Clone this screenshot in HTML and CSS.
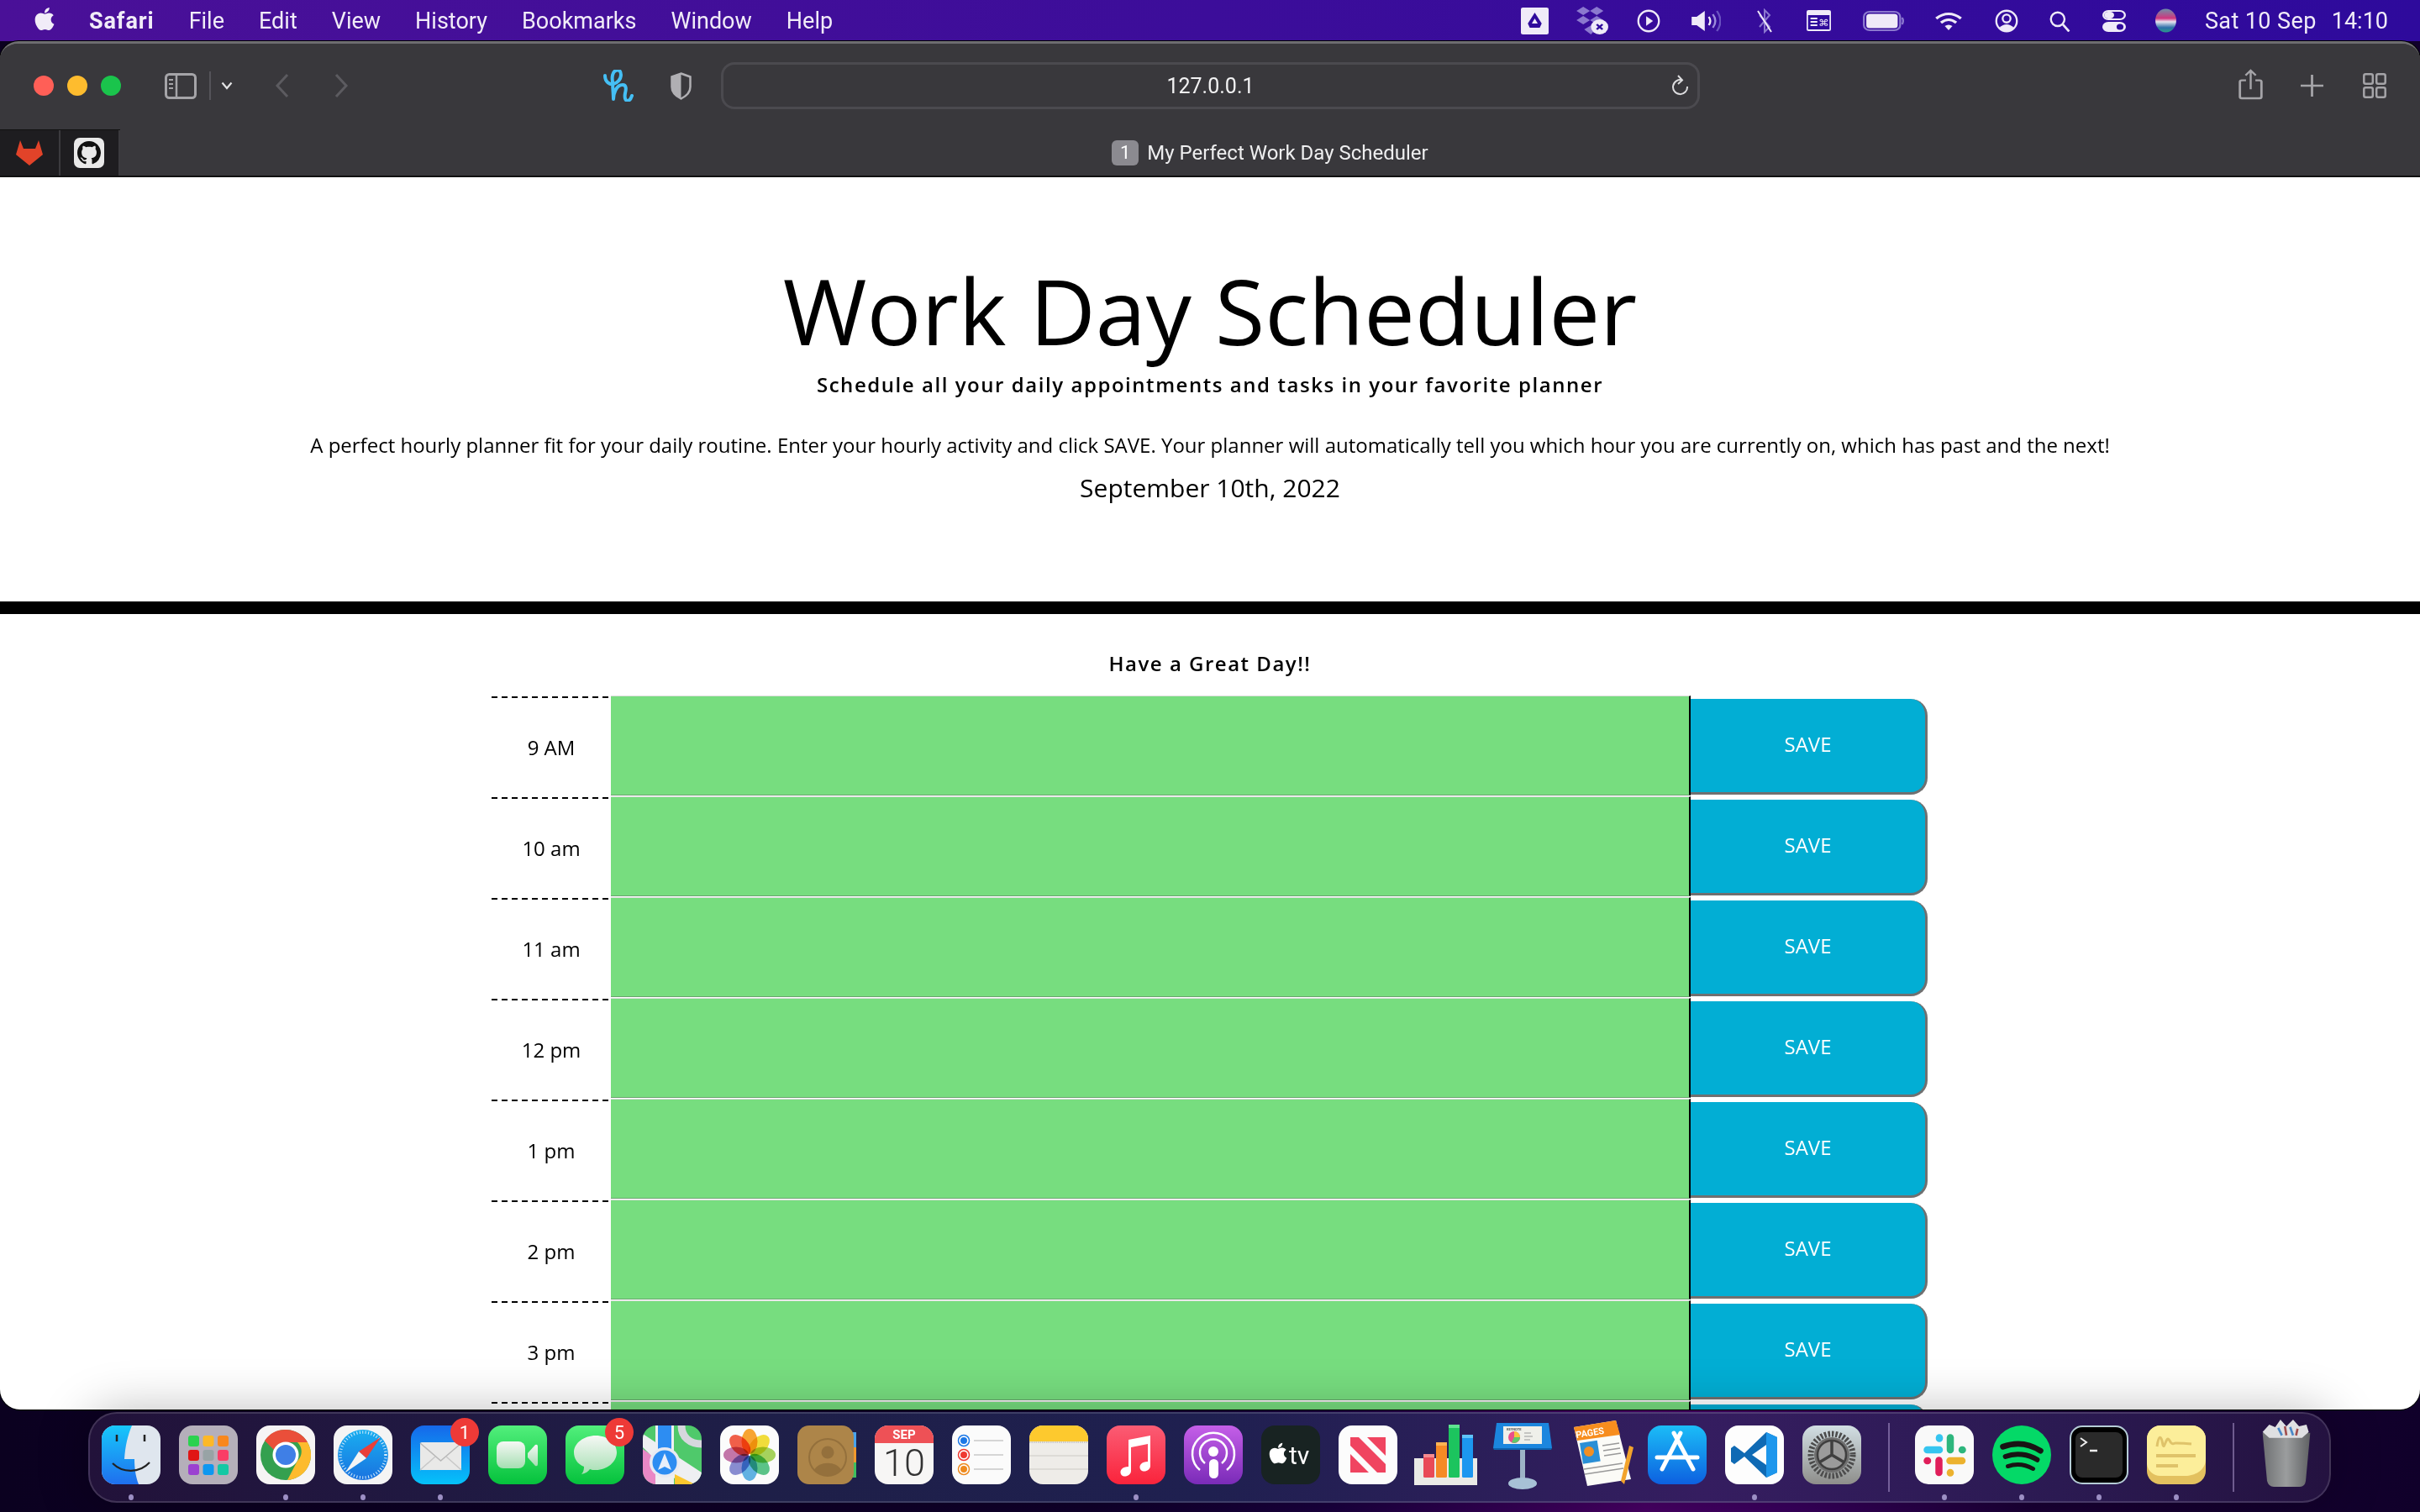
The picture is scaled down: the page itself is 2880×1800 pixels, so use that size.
FILE: index.html
```html
<!DOCTYPE html>
<html lang="en">
<head>
<meta charset="utf-8">
<title>My Perfect Work Day Scheduler</title>
<link rel="stylesheet" href="styles.css">
</head>
<body>
<div class="menubar">
  <svg class="apple" viewBox="0 0 384 512"><path fill="#f1ecf8" d="M318.7 268.7c-.2-36.7 16.4-64.4 50-84.8-18.8-26.9-47.2-41.7-84.7-44.6-35.5-2.8-74.3 20.7-88.5 20.7-15 0-49.4-19.7-76.4-19.7C63.3 141.2 4 184.8 4 273.5q0 39.3 14.4 81.2c12.8 36.7 59 126.7 107.2 125.2 25.2-.6 43-17.9 75.8-17.9 31.8 0 48.3 17.9 76.4 17.9 48.6-.7 90.4-82.5 102.6-119.3-65.2-30.7-61.7-90-61.7-91.9zm-56.6-164.2c27.3-32.4 24.8-61.9 24-72.5-24.1 1.4-52 16.4-67.9 34.9-17.5 19.8-27.8 44.3-25.6 71.9 26.1 2 49.9-11.4 69.5-34.3z"/></svg>
  <nav class="menus">
    <span class="menu-app">Safari</span><span>File</span><span>Edit</span><span>View</span><span>History</span><span>Bookmarks</span><span>Window</span><span>Help</span>
  </nav>
  <div class="status">
    <svg class="st-drive" viewBox="0 0 28 32" preserveAspectRatio="none"><rect width="28" height="32" rx="2" fill="#efeaf8"/><path d="M14 6l7 13-2 5H9l-2-5z" fill="#2f0a9c"/><path d="M14 13l3 6h-6z" fill="#efeaf8"/></svg>
    <svg class="st-dropbox" viewBox="0 0 34 33" preserveAspectRatio="none"><g fill="#8b78cf"><path d="M8 0l7 5-7 5-7-5z"/><path d="M22 0l7 5-7 5-7-5z"/><path d="M8 11l7 5-7 5-7-5z"/><path d="M22 11l7 5-7 5-7-5z"/><path d="M15 23l7-5 3 3-9 12-7-6z"/></g><circle cx="25" cy="24" r="9" fill="#efeaf8"/><path d="M22 21l6 6m0-6l-6 6" stroke="#2f0a9c" stroke-width="2.2"/></svg>
    <svg class="st-play" viewBox="0 0 24 24"><circle cx="12" cy="12" r="10.5" fill="none" stroke="#efeaf8" stroke-width="2"/><path d="M9.5 7l7 5-7 5z" fill="#efeaf8"/></svg>
    <svg class="st-vol" viewBox="0 0 30 26" preserveAspectRatio="none"><path d="M1 8h5l8-7v24l-8-7H1z" fill="#efeaf8"/><path d="M18 8q3 5 0 10" fill="none" stroke="#efeaf8" stroke-width="2"/><path d="M22 5q5 8 0 16" fill="none" stroke="#9c8cdb" stroke-width="2"/><path d="M26 1q7 12 0 24" fill="none" stroke="#6a52c0" stroke-width="2"/></svg>
    <svg class="st-bt" viewBox="0 0 22 30"><path d="M5 8l12 14-6 6V2l6 6L5 22" fill="none" stroke="#8b78cf" stroke-width="2"/><path d="M3 3l16 25" stroke="#efeaf8" stroke-width="2"/></svg>
    <svg class="st-cmd" viewBox="0 0 25 25" preserveAspectRatio="none"><rect width="25" height="25" rx="2" fill="#efeaf8"/><rect x="1.5" y="6" width="22" height="17" fill="#2f0a9c"/><path d="M4 10h7M4 14h7M4 18h7" stroke="#efeaf8" stroke-width="2"/><text class="st-cmd-key" x="12" y="19">⌘</text></svg>
    <svg class="st-batt" viewBox="0 0 42 24" preserveAspectRatio="none"><rect x="1" y="1" width="37" height="22" rx="6" fill="none" stroke="#8b78cf" stroke-width="2"/><rect x="3.5" y="3.500" width="32" height="17" rx="3.500" fill="#efeaf8"/><path d="M40 8q2 4 0 8" fill="none" stroke="#8b78cf" stroke-width="2"/></svg>
    <svg class="st-wifi" viewBox="0 0 30 24" preserveAspectRatio="none"><path d="M2 9q13-11 26 0M7 14q8-7 16 0" fill="none" stroke="#efeaf8" stroke-width="3"/><path d="M11 18q4-3 8 0l-4 5z" fill="#efeaf8"/></svg>
    <svg class="st-user" viewBox="0 0 24 24"><circle cx="12" cy="12" r="10.500" fill="none" stroke="#efeaf8" stroke-width="2"/><circle cx="12" cy="9.500" r="4" fill="none" stroke="#efeaf8" stroke-width="2"/><path d="M4.500 19q7.500-7 15 0-7.500 7-15 0z" fill="#efeaf8"/></svg>
    <svg class="st-search" viewBox="0 0 24 24"><circle cx="10" cy="10" r="7.500" fill="none" stroke="#efeaf8" stroke-width="2.200"/><path d="M15.500 15.500l7 8" stroke="#efeaf8" stroke-width="2.500"/></svg>
    <svg class="st-cc" viewBox="0 0 24 26" preserveAspectRatio="none"><rect x="1" y="1" width="22" height="10" rx="5" fill="none" stroke="#efeaf8" stroke-width="2"/><rect x="2" y="2" width="10" height="8" rx="4" fill="#efeaf8"/><rect y="14" width="24" height="12" rx="6" fill="#efeaf8"/><circle cx="18" cy="20" r="3.500" fill="#2f0a9c"/></svg>
    <svg class="st-siri" viewBox="0 0 28 28"><defs><linearGradient id="siri" x1="0" y1="0" x2="0" y2="1"><stop offset="0" stop-color="#6e8fa8"/><stop offset=".4" stop-color="#d0367e"/><stop offset=".55" stop-color="#e8e4f0"/><stop offset=".8" stop-color="#2c6ea8"/><stop offset="1" stop-color="#2c9a8a"/></linearGradient></defs><ellipse cx="14" cy="14" rx="12" ry="13.500" fill="url(#siri)"/></svg>
    <span class="clock-date">Sat 10 Sep</span><span class="clock-time">14:10</span>
  </div>
</div>

<div class="window">
  <header class="toolbar">
    <div class="lights"><i class="light red"></i><i class="light amber"></i><i class="light green"></i></div>
    <svg class="tb-sidebar" viewBox="0 0 38 31"><rect x="1.500" y="1.500" width="35" height="28" rx="4" fill="none" stroke="#a5a4a8" stroke-width="3"/><path d="M14 2v27" stroke="#a5a4a8" stroke-width="2.500"/><path d="M5 8h5M5 13h5M5 18h5" stroke="#a5a4a8" stroke-width="2"/></svg>
    <i class="tb-divider"></i>
    <svg class="tb-chev" viewBox="0 0 14 10"><path d="M1.500 1.500L7 8l5.500-6.500" fill="none" stroke="#e2e2e4" stroke-width="2.200"/></svg>
    <svg class="tb-back" viewBox="0 0 17 30"><path d="M15 2L3 15l12 13" fill="none" stroke="#5c5b60" stroke-width="3"/></svg>
    <svg class="tb-fwd" viewBox="0 0 17 30"><path d="M2 2l12 13L2 28" fill="none" stroke="#5c5b60" stroke-width="3"/></svg>
    <svg class="tb-h" viewBox="0 0 36 38"><path d="M2 7c0 8 6 11 10 10s9-5 9-11-4-6-6-5c-4 1-5 8-4 13 0 7 1 15 1 21 0-6 3-17 11-17 5 0 4 6 3 10-1 5 0 9 3 9 3 0 4-3 5-6" fill="none" stroke="#45bff5" stroke-width="4" stroke-linecap="round" stroke-linejoin="round"/></svg>
    <svg class="tb-shield" viewBox="0 0 27 33"><path d="M13.500 1.500l11 4v12c0 7-5 11-11 14-6-3-11-7-11-14v-12z" fill="none" stroke="#b0afb3" stroke-width="2.500"/><path d="M13.500 1.500v30c-6-3-11-7-11-14v-12z" fill="#b0afb3"/></svg>
    <div class="urlbar">
      <span class="url">127.0.0.1</span>
      <svg class="tb-reload" viewBox="0 0 20 26"><path d="M12 6.500A8.500 8.500 0 1 0 18 14" fill="none" stroke="#dcdcde" stroke-width="2"/><path d="M7 1l5 5.500L7 11" fill="none" stroke="#dcdcde" stroke-width="2"/></svg>
    </div>
    <svg class="tb-share" viewBox="0 0 26 38" preserveAspectRatio="none"><path d="M8 14H3.500a2 2 0 0 0-2 2v18a2 2 0 0 0 2 2h19a2 2 0 0 0 2-2V16a2 2 0 0 0-2-2H18" fill="none" stroke="#a5a4a8" stroke-width="2.500"/><path d="M13 25V2M7.500 8L13 2l5.500 6" fill="none" stroke="#a5a4a8" stroke-width="2.200"/></svg>
    <svg class="tb-plus" viewBox="0 0 24 26" preserveAspectRatio="none"><path d="M12 0v26M0 13h24" stroke="#a5a4a8" stroke-width="2.500"/></svg>
    <svg class="tb-grid" viewBox="0 0 28 30"><g fill="none" stroke="#a5a4a8" stroke-width="2.500"><rect x="1.300" y="1.300" width="10.500" height="11.500" rx="2"/><rect x="16.200" y="1.300" width="10.500" height="11.500" rx="2"/><rect x="1.300" y="17.200" width="10.500" height="11.500" rx="2"/><rect x="16.200" y="17.200" width="10.500" height="11.500" rx="2"/></g></svg>
  </header>
  <div class="tabbar">
    <div class="pins">
      <div class="pin"><svg class="pin-gitlab" viewBox="0 0 32 30"><path d="M5 0l4 10h14l4-10 5 17-16 13L0 17z" fill="#e24329"/></svg></div>
      <div class="pin"><svg class="pin-github" viewBox="0 0 36 36"><rect width="36" height="36" rx="7" fill="#e9e9e9"/><g transform="translate(4 4) scale(1.750)"><path fill="#111" d="M8 0C3.580 0 0 3.580 0 8c0 3.540 2.290 6.530 5.470 7.590.4.070.55-.17.55-.38 0-.19-.01-.82-.01-1.490-2.010.37-2.530-.49-2.690-.94-.09-.23-.48-.94-.82-1.130-.28-.15-.68-.52-.01-.53.63-.01 1.080.58 1.230.82.72 1.210 1.870.87 2.330.66.07-.52.28-.87.51-1.070-1.780-.2-3.640-.89-3.640-3.950 0-.87.31-1.590.82-2.150-.08-.2-.36-1.020.08-2.120 0 0 .67-.21 2.200.82.64-.18 1.320-.27 2-.27s1.360.09 2 .27c1.530-1.040 2.200-.82 2.200-.82.44 1.100.16 1.920.08 2.120.51.56.82 1.270.82 2.150 0 3.070-1.870 3.750-3.650 3.950.29.25.54.73.54 1.480 0 1.070-.01 1.930-.01 2.200 0 .21.15.46.55.38A8.013 8.013 0 0 0 16 8c0-4.420-3.580-8-8-8z"/></g></svg></div>
    </div>
    <div class="tab-title"><span class="tab-badge">1</span><span>My Perfect Work Day Scheduler</span></div>
  </div>

  <main class="page">
    <section class="intro">
      <h1 class="title">Work Day Scheduler</h1>
      <p class="lead">Schedule all your daily appointments and tasks in your favorite planner</p>
      <p class="blurb">A perfect hourly planner fit for your daily routine. Enter your hourly activity and click SAVE. Your planner will automatically tell you which hour you are currently on, which has past and the next!</p>
      <p class="today">September 10th, 2022</p>
    </section>
    <hr class="rule">
    <p class="greeting">Have a Great Day!!</p>
    <div class="planner">
      <div class="row"><div class="hour">9 AM</div><div class="task"></div><button class="save">SAVE</button></div>
      <div class="row"><div class="hour">10 am</div><div class="task"></div><button class="save">SAVE</button></div>
      <div class="row"><div class="hour">11 am</div><div class="task"></div><button class="save">SAVE</button></div>
      <div class="row"><div class="hour">12 pm</div><div class="task"></div><button class="save">SAVE</button></div>
      <div class="row"><div class="hour">1 pm</div><div class="task"></div><button class="save">SAVE</button></div>
      <div class="row"><div class="hour">2 pm</div><div class="task"></div><button class="save">SAVE</button></div>
      <div class="row"><div class="hour">3 pm</div><div class="task"></div><button class="save">SAVE</button></div>
      <div class="row"><div class="hour"></div><div class="task"></div><button class="save"></button></div>
    </div>
  </main>
</div>

<div class="dock">
  <div class="app"><svg viewBox="0 0 70 70"><defs><linearGradient id="fd" x1="0" y1="0" x2="0" y2="1"><stop offset="0" stop-color="#17c8fb"/><stop offset="1" stop-color="#1f6fee"/></linearGradient></defs><rect width="70" height="70" rx="16" fill="#dfe6ee"/><path d="M16 0h20c-5 12-8 24-9 40h12c0 9 1 20 5 30H16A16 16 0 0 1 0 54V16A16 16 0 0 1 16 0z" fill="url(#fd)"/><path d="M18 11v8M51 11v8" stroke="#222" stroke-width="2.500"/><path d="M13 45c12 12 32 12 44-1" fill="none" stroke="#222" stroke-width="2.200"/></svg><i class="dot"></i></div>
  <div class="app"><svg viewBox="0 0 70 70"><rect width="70" height="70" rx="16" fill="#b5afba"/><rect x="11" y="12" width="13" height="13" rx="3" fill="#2bd24f"/><rect x="28.500" y="12" width="13" height="13" rx="3" fill="#fdb827"/><rect x="46" y="12" width="13" height="13" rx="3" fill="#f8871e"/><rect x="11" y="29" width="13" height="13" rx="3" fill="#e01515"/><rect x="28.500" y="29" width="13" height="13" rx="3" fill="#98a3a5"/><rect x="46" y="29" width="13" height="13" rx="3" fill="#fa3d66"/><rect x="11" y="46" width="13" height="13" rx="3" fill="#9b41d1"/><rect x="28.500" y="46" width="13" height="13" rx="3" fill="#0e97f0"/><rect x="46" y="46" width="13" height="13" rx="3" fill="#14c8a4"/></svg></div>
  <div class="app"><svg viewBox="0 0 70 70"><rect width="70" height="70" rx="16" fill="#f6f4f4"/><circle cx="35" cy="35" r="30" fill="#34a04f"/><path d="M35 5a30 30 0 0 1 26 15H35a15 15 0 0 0-14 9L10 18A30 30 0 0 1 35 5z" fill="#ea4f3a"/><path d="M61 20a30 30 0 0 1-24 45l12-23a15 15 0 0 0 0-22z" fill="#fdbb2d"/><circle cx="35" cy="35" r="15.500" fill="#fff"/><circle cx="35" cy="35" r="12" fill="#3f7fe6"/></svg><i class="dot"></i></div>
  <div class="app"><svg viewBox="0 0 70 70"><defs><linearGradient id="sf" x1="0" y1="0" x2="0" y2="1"><stop offset="0" stop-color="#19aef0"/><stop offset="1" stop-color="#1a73e0"/></linearGradient></defs><rect width="70" height="70" rx="16" fill="#f4f4f4"/><circle cx="35" cy="35" r="30" fill="url(#sf)"/><circle cx="35" cy="35" r="27" fill="none" stroke="#d9eefb" stroke-width="3.500" stroke-dasharray="1 2.500"/><path d="M56 14L30 31l9 8z" fill="#ea3f38"/><path d="M14 56l16-25 9 8z" fill="#f4f4f4"/></svg><i class="dot"></i></div>
  <div class="app"><svg viewBox="0 0 70 70"><defs><linearGradient id="ml" x1="0" y1="0" x2="0" y2="1"><stop offset="0" stop-color="#1668ea"/><stop offset="1" stop-color="#05c2fa"/></linearGradient></defs><rect width="70" height="70" rx="16" fill="url(#ml)"/><rect x="11" y="20" width="49" height="33" rx="2" fill="#e9e9e8"/><path d="M11 21l24.500 21L60 21" fill="none" stroke="#b8b8b8" stroke-width="1.500"/><path d="M11 53l18-16M60 53L42 37" fill="none" stroke="#c8c8c8" stroke-width="1.500"/></svg><span class="badge">1</span><i class="dot"></i></div>
  <div class="app"><svg viewBox="0 0 70 70"><defs><linearGradient id="ft" x1="0" y1="0" x2="0" y2="1"><stop offset="0" stop-color="#52ef7c"/><stop offset="1" stop-color="#05c23c"/></linearGradient><linearGradient id="ftc" x1="0" y1="0" x2="0" y2="1"><stop offset="0" stop-color="#f6f8f5"/><stop offset="1" stop-color="#a5dfb2"/></linearGradient></defs><rect width="70" height="70" rx="16" fill="url(#ft)"/><rect x="10" y="19" width="34" height="32" rx="8" fill="url(#ftc)"/><path d="M47 33l9-10q3-1 3 2v21q0 3-3 2l-9-10z" fill="url(#ftc)"/></svg></div>
  <div class="app"><svg viewBox="0 0 70 70"><rect width="70" height="70" rx="16" fill="url(#ft)"/><path d="M36 12c14 0 25 9 25 20S50 53 36 53c-3 0-5 0-7-1-2 3-5 5-10 6 2-2 3-5 3-9-8-3-12-10-12-17 0-11 12-20 26-20z" fill="url(#ftc)"/></svg><span class="badge">5</span></div>
  <div class="app"><svg viewBox="0 0 70 70"><clipPath id="mp"><rect width="70" height="70" rx="16"/></clipPath><g clip-path="url(#mp)"><rect width="70" height="70" fill="#4fc96b"/><path d="M0 28l14 10 8 32H0z" fill="#e988c6"/><path d="M0 10l70 46v14H45L0 26z" fill="#eeeff2"/><path d="M38 58l24 12H38z" fill="#fbc72e"/><path d="M15 0h22v70H15z" fill="#eeeff2"/><path d="M18 0h16v40H18z" fill="#2d8df2"/><path d="M46 0c0 14 10 22 24 22" fill="none" stroke="#d6d7dd" stroke-width="9"/><circle cx="26" cy="44" r="18" fill="#e8eaf2"/><circle cx="26" cy="44" r="14.500" fill="#2d8df2"/><path d="M26 33l8 20-8-4-8 4z" fill="#e9effa"/></g></svg></div>
  <div class="app"><svg viewBox="0 0 70 70"><rect width="70" height="70" rx="16" fill="#fbfbfb"/><g class="petals" transform="translate(35 35)"><ellipse cx="0" cy="-16" rx="9.500" ry="15" fill="#fba732"/><ellipse cx="0" cy="-16" rx="9.500" ry="15" fill="#f5e03c" transform="rotate(45)"/><ellipse cx="0" cy="-16" rx="9.500" ry="15" fill="#a8d65e" transform="rotate(90)"/><ellipse cx="0" cy="-16" rx="9.500" ry="15" fill="#5cc68a" transform="rotate(135)"/><ellipse cx="0" cy="-16" rx="9.500" ry="15" fill="#62b4e6" transform="rotate(180)"/><ellipse cx="0" cy="-16" rx="9.500" ry="15" fill="#8a8ed4" transform="rotate(225)"/><ellipse cx="0" cy="-16" rx="9.500" ry="15" fill="#c678ac" transform="rotate(270)"/><ellipse cx="0" cy="-16" rx="9.500" ry="15" fill="#f4604a" transform="rotate(315)"/></g></svg></div>
  <div class="app"><svg viewBox="0 0 70 70"><rect x="60" y="8" width="10" height="18" fill="#49a4ec"/><rect x="60" y="26" width="10" height="18" fill="#f0992d"/><rect x="60" y="44" width="10" height="18" fill="#3fbf5f"/><rect width="67" height="70" rx="14" fill="#ad8549"/><circle cx="36" cy="38" r="22" fill="none" stroke="#94703c" stroke-width="2"/><circle cx="36" cy="32" r="7.500" fill="#94703c"/><path d="M20 53c5-11 27-11 32 0a22 22 0 0 1-32 0z" fill="#94703c"/></svg></div>
  <div class="app"><svg viewBox="0 0 70 70"><rect width="70" height="70" rx="16" fill="#f7f6f5"/><path d="M0 21V16A16 16 0 0 1 16 0h38a16 16 0 0 1 16 16v5z" fill="#ee5156"/><text class="cal-mon" x="35" y="16" text-anchor="middle">SEP</text><text class="cal-day" x="35" y="60" text-anchor="middle">10</text></svg></div>
  <div class="app"><svg viewBox="0 0 70 70"><rect width="70" height="70" rx="16" fill="#fbfbfb"/><circle cx="14" cy="18" r="6.500" fill="#fff" stroke="#1b77e6" stroke-width="1.500"/><circle cx="14" cy="18" r="4" fill="#1b77e6"/><circle cx="14" cy="35" r="6.500" fill="#fff" stroke="#ef3a32" stroke-width="1.500"/><circle cx="14" cy="35" r="4" fill="#ef3a32"/><circle cx="14" cy="52" r="6.500" fill="#fff" stroke="#ee8a1e" stroke-width="1.500"/><circle cx="14" cy="52" r="4" fill="#ee8a1e"/><path d="M26 18h35M26 35h35M26 52h35" stroke="#c9c9c9" stroke-width="1.600"/></svg></div>
  <div class="app"><svg viewBox="0 0 70 70"><clipPath id="nt"><rect width="70" height="70" rx="16"/></clipPath><g clip-path="url(#nt)"><rect width="70" height="70" fill="#eeece8"/><rect width="70" height="19" fill="#fdc92e"/><path d="M0 20h70" stroke="#c2c0ba" stroke-width="1.500" stroke-dasharray="1.500 1"/><path d="M0 36h70M0 52h70" stroke="#d7d5d0" stroke-width="1.500"/></g></svg></div>
  <div class="app"><svg viewBox="0 0 70 70"><defs><linearGradient id="mu" x1="0" y1="0" x2="0" y2="1"><stop offset="0" stop-color="#fb5c74"/><stop offset="1" stop-color="#fa233b"/></linearGradient></defs><rect width="70" height="70" rx="16" fill="url(#mu)"/><path d="M52 12v36c0 6-9 9-12 4-2-5 2-9 9-9V22l-20 4v28c0 6-9 9-12 4-2-5 2-9 9-9V17z" fill="#fff"/></svg><i class="dot"></i></div>
  <div class="app"><svg viewBox="0 0 70 70"><defs><linearGradient id="pd" x1="0" y1="0" x2="0" y2="1"><stop offset="0" stop-color="#c55fe8"/><stop offset="1" stop-color="#7a2bb8"/></linearGradient></defs><rect width="70" height="70" rx="16" fill="url(#pd)"/><g fill="none" stroke="#fff" stroke-width="2.500"><path d="M19 53a25 25 0 1 1 32 0"/><path d="M25 45a16 16 0 1 1 20 0"/></g><circle cx="35" cy="31" r="6" fill="#fff"/><rect x="30" y="40" width="11" height="23" rx="5.500" fill="#fff"/></svg></div>
  <div class="app"><svg viewBox="0 0 70 70"><rect width="70" height="70" rx="16" fill="#182322"/><svg class="tv-apple" x="9" y="19" width="22" height="28" viewBox="0 0 384 512"><path fill="#fff" d="M318.700 268.700c-.2-36.700 16.400-64.400 50-84.800-18.800-26.900-47.200-41.700-84.700-44.600-35.500-2.800-74.300 20.700-88.500 20.700-15 0-49.400-19.700-76.400-19.700C63.300 141.200 4 184.800 4 273.500q0 39.300 14.400 81.200c12.800 36.700 59 126.700 107.200 125.200 25.200-.6 43-17.900 75.800-17.900 31.800 0 48.300 17.900 76.400 17.900 48.600-.7 90.400-82.500 102.600-119.300-65.200-30.700-61.700-90-61.700-91.900zm-56.600-164.200c27.300-32.400 24.800-61.900 24-72.500-24.100 1.400-52 16.400-67.900 34.900-17.500 19.800-27.800 44.300-25.600 71.900 26.100 2 49.900-11.400 69.500-34.300z"/></svg><text class="tv-label" x="33" y="46">tv</text></svg></div>
  <div class="app"><svg viewBox="0 0 70 70"><rect width="70" height="70" rx="16" fill="#fcfcfc"/><path d="M14 14h10l32 32v10H46L14 24z" fill="#f04460"/><path d="M34 14h22v22z" fill="#f04460"/><path d="M14 34l22 22H14z" fill="#f04460"/></svg></div>
  <div class="app app-numbers"><svg viewBox="0 0 75 72"><rect y="40" width="75" height="32" fill="#eaeae6"/><rect x="11" y="35" width="13" height="28" rx="1.500" fill="#e94a57"/><rect x="26" y="21" width="13" height="42" rx="1.500" fill="#f58a25"/><rect x="41" y="0" width="13" height="63" rx="1.500" fill="#1cc45e"/><rect x="57" y="12" width="13" height="51" rx="1.500" fill="#1c97f0"/><path d="M11 35h13v4H11z" fill="#f58a8f"/><path d="M26 21h13v4H26z" fill="#fbb454"/><path d="M41 0h13v4H41z" fill="#5fe391"/><path d="M57 12h13v4H57z" fill="#5fc4f8"/></svg></div>
  <div class="app app-keynote"><svg viewBox="0 0 70 80"><rect x="32" y="29" width="6" height="39" fill="#9db4c6"/><ellipse cx="35" cy="72" rx="17" ry="7" fill="#a7c1d6"/><path d="M4 0h62l4 30H0z" fill="#1b86de"/><path d="M0 30h70l-1 2H1z" fill="#0d62ad"/><path d="M12 4h46v21H12z" fill="#eff0ea"/><text class="key-label" x="16" y="9">KEYNOTE</text><circle cx="25" cy="17" r="7" fill="#e94f8b"/><path d="M25 17v-7a7 7 0 0 1 7 7z" fill="#f8c43c"/><path d="M25 17h7a7 7 0 0 1-10 6z" fill="#60c86a"/><path d="M37 12h8M37 16h10M37 20h7" stroke="#9a9a9a" stroke-width="1.200"/></svg></div>
  <div class="app app-tilt"><svg viewBox="0 0 74 78"><path d="M4 8l50-8 18 70-52 8z" fill="#fbfbf7"/><path d="M4 8l50-8 5 17L8 24z" fill="#f78d1e"/><text class="pages-label" x="7" y="21" transform="rotate(-9 7 21)">PAGES</text><rect x="11" y="27" width="21" height="25" fill="#2a8fd6" transform="rotate(-9 11 27)"/><circle cx="22" cy="37" r="6" fill="#f28f22"/><path d="M38 30l20-3M39 36l20-3M40 42l20-3M16 58l46-7M17 64l46-7" stroke="#999" stroke-width="1.500"/><path d="M70 30l-10 42 4 4 11-44z" fill="#f2a32c"/></svg></div>
  <div class="app"><svg viewBox="0 0 70 70"><defs><linearGradient id="as" x1="0" y1="0" x2="0" y2="1"><stop offset="0" stop-color="#1bbdf7"/><stop offset="1" stop-color="#0d60e0"/></linearGradient></defs><rect width="70" height="70" rx="16" fill="url(#as)"/><g stroke="#fff" stroke-linecap="round" fill="none"><path d="M39 9L17 52" stroke-width="5"/><path d="M31 9l23 43" stroke-width="5"/><path d="M11 38h48" stroke-width="5"/></g></svg></div>
  <div class="app"><svg viewBox="0 0 70 70"><rect width="70" height="70" rx="16" fill="#fdfdfd"/><path d="M49 8L23 33 11 24l-4 3v16l4 3 12-9 26 25 13-6V14z" fill="#0f6ab4"/><path d="M49 8l13 6v42l-13 6z" fill="#1d97ec"/><path d="M49 23L32 35l17 12z" fill="#fdfdfd"/></svg><i class="dot"></i></div>
  <div class="app"><svg viewBox="0 0 70 70"><defs><linearGradient id="sp" x1="0" y1="0" x2="0" y2="1"><stop offset="0" stop-color="#d2dfe4"/><stop offset="1" stop-color="#8e8e8b"/></linearGradient></defs><rect width="70" height="70" rx="16" fill="url(#sp)"/><circle cx="35" cy="35" r="25" fill="none" stroke="#4c4c4c" stroke-width="7" stroke-dasharray="2.500 2"/><circle cx="35" cy="35" r="21" fill="#6f6f6f"/><circle cx="35" cy="35" r="17" fill="#9b9b9b" stroke="#3f3f3f" stroke-width="2.500"/><path d="M35 35V18M35 35l15 9M35 35l-15 9" stroke="#3f3f3f" stroke-width="3.500"/></svg></div>
  <i class="dock-sep"></i>
  <div class="app"><svg viewBox="0 0 70 70"><rect width="70" height="70" rx="16" fill="#f9f9f9"/><g stroke-width="8.500" stroke-linecap="round" fill="none"><path d="M29 14.500v1" stroke="#36c5f0"/><path d="M14.500 29h14.500" stroke="#36c5f0"/><path d="M42 14.500V29" stroke="#2eb67d"/><path d="M56 29h.5" stroke="#2eb67d"/><path d="M41.500 42H56" stroke="#ecb22e"/><path d="M42 56v.5" stroke="#ecb22e"/><path d="M28.500 41.500V56" stroke="#e01e5a"/><path d="M14.500 42h.5" stroke="#e01e5a"/></g></svg><i class="dot"></i></div>
  <div class="app"><svg viewBox="0 0 72 72"><circle cx="36" cy="36" r="36" fill="#04d967"/><g fill="none" stroke="#191414" stroke-linecap="round"><path d="M13 26c16-6 32-4 46 5" stroke-width="7"/><path d="M16 38c13-5 28-3 39 4" stroke-width="6"/><path d="M19 50c11-4 22-2 31 3" stroke-width="5"/></g></svg><i class="dot"></i></div>
  <div class="app"><svg viewBox="0 0 70 70"><rect x="1" y="1" width="68" height="68" rx="14" fill="#000" stroke="#b5ccd6" stroke-width="2"/><rect x="7" y="8" width="56" height="54" rx="8" fill="#2a2a2a"/><path d="M13 15l7 5-7 5" fill="none" stroke="#eee" stroke-width="2"/><path d="M24 30h9" stroke="#eee" stroke-width="2.500"/></svg><i class="dot"></i></div>
  <div class="app"><svg viewBox="0 0 70 70"><rect width="70" height="70" rx="16" fill="#e3c15f"/><path d="M16 0h38a16 16 0 0 1 16 16v24c0 14-14 20-24 20H16A16 16 0 0 1 0 46V16A16 16 0 0 1 16 0z" fill="#fcee9a"/><path d="M12 25c2-14 5-14 7-2 2 7 4-13 8-5 3 6 5 3 7 3 5 0 10 0 19 1" fill="none" stroke="#dfc36a" stroke-width="3"/><path d="M11 36h47" stroke="#dfc36a" stroke-width="4"/><path d="M11 48h26" stroke="#dfc36a" stroke-width="4"/></svg><i class="dot"></i></div>
  <i class="dock-sep dock-sep-end"></i>
  <div class="app app-trash"><svg viewBox="0 0 70 82" preserveAspectRatio="none"><defs><linearGradient id="tr" x1="0" y1="0" x2="1" y2="0"><stop offset="0" stop-color="#6e7072"/><stop offset=".5" stop-color="#9b9d9e"/><stop offset="1" stop-color="#5f6163"/></linearGradient></defs><path d="M3 16h64l-6 58q-1 7-8 7H18q-7 0-9-7z" fill="url(#tr)"/><path d="M3 15l9-9 8 3 7-9 8 8 9-8 8 8 10-2 3 9-9 7H12z" fill="#dfe0e2"/><path d="M24 10l5 9M40 9l4 10" stroke="#4a88c8" stroke-width="3"/><path d="M33 8l2 11M50 11l-2 8" stroke="#a14f4f" stroke-width="3"/></svg></div>
</div>
</body>
</html>
```

FILE: styles.css
```css
* { box-sizing: border-box; }

html, body {
  margin: 0;
  width: 2880px;
  height: 1800px;
  overflow: hidden;
}

body {
  position: relative;
  display: flex;
  flex-direction: column;
  font-family: "Open Sans", sans-serif;
  background: linear-gradient(90deg, #0b0120 0%, #10012c 45%, #1a0040 55%, #4a0068 68%, #3a0060 74%, #1a0036 84%, #10002a 100%);
}

/* macOS menu bar */
.menubar {
  height: 49px;
  flex: none;
  display: flex;
  align-items: center;
  padding: 0 38px 0 40px;
  color: #f1ecf8;
  font-family: Roboto, sans-serif;
  font-size: 27px;
  background: linear-gradient(90deg, #4a1098 0%, #2e0a9c 100%);
}

.apple { width: 26px; height: 31px; margin-top: -4px; flex: none; }

.menus { display: flex; gap: 41px; margin-left: 40px; }
.menu-app { font-weight: 700; letter-spacing: .9px; }

.status { display: flex; align-items: center; margin-left: auto; }
.status svg { flex: none; }
.st-drive { width: 33px; height: 32px; }
.st-dropbox { width: 39px; height: 33px; margin-left: 32px; }
.st-play { width: 28px; height: 28px; margin-left: 34px; }
.st-vol { width: 36px; height: 26px; margin-left: 36px; }
.st-bt { width: 22px; height: 30px; margin-left: 41px; }
.st-cmd { width: 29px; height: 25px; margin-left: 39px; }
.st-cmd-key { font-size: 11px; fill: #efeaf8; font-family: "DejaVu Sans", sans-serif; }
.st-batt { width: 49px; height: 24px; margin-left: 38px; }
.st-wifi { width: 34px; height: 24px; margin-left: 36px; }
.st-user { width: 28px; height: 28px; margin-left: 38px; }
.st-search { width: 26px; height: 26px; margin-left: 36px; }
.st-cc { width: 28px; height: 26px; margin-left: 38px; }
.st-siri { width: 29px; height: 29px; margin-left: 33px; }
.clock-date { margin-left: 32px; letter-spacing: .4px; }
.clock-time { margin-left: 18px; }

/* Safari window */
.window {
  flex: none;
  height: 1629px;
  display: flex;
  flex-direction: column;
  overflow: hidden;
  border-radius: 22px 22px 24px 24px;
  border-top: 3px solid #6e6d71;
  background: #39383c;
  box-shadow: 0 0 0 1px #000;
}

.toolbar {
  height: 102px;
  flex: none;
  display: flex;
  align-items: center;
  padding-bottom: 2px;
  background: #39383c;
}

.toolbar svg { flex: none; }

.lights { display: flex; gap: 16px; margin-left: 40px; }
.light { width: 24px; height: 24px; border-radius: 50%; display: block; }
.red { background: #ff5f57; }
.amber { background: #febc2e; }
.green { background: #1ac44c; }

.tb-sidebar { width: 38px; height: 31px; margin-left: 52px; }
.tb-divider { width: 2px; height: 34px; background: #55545a; margin-left: 15px; }
.tb-chev { width: 14px; height: 10px; margin-left: 12px; }
.tb-back { width: 17px; height: 30px; margin-left: 50px; }
.tb-fwd { width: 17px; height: 30px; margin-left: 54px; }
.tb-h { width: 36px; height: 38px; margin-left: 303px; }
.tb-shield { width: 27px; height: 33px; margin-left: 43px; }

.urlbar {
  width: 1165px;
  height: 56px;
  margin-left: 34px;
  flex: none;
  display: flex;
  align-items: center;
  justify-content: center;
  position: relative;
  border: 3px solid #4b4a4f;
  border-radius: 16px;
  color: #f2f2f3;
  font-family: Roboto, sans-serif;
  font-size: 25px;
}

.tb-reload { width: 20px; height: 26px; position: absolute; right: 10px; top: 12px; }

.tb-share { width: 29px; height: 37px; margin-left: 641px; margin-top: -3px; }
.tb-plus { width: 27px; height: 26px; margin-left: 45px; }
.tb-grid { width: 30px; height: 30px; margin-left: 46px; }

.tabbar {
  height: 57px;
  flex: none;
  display: flex;
  align-items: stretch;
  background: #39383c;
  border-bottom: 2px solid #111;
}

.pins { display: flex; background: #1e1d20; border-top: 1px solid #111; }
.pin {
  width: 71.500px;
  display: flex;
  align-items: center;
  justify-content: center;
  border-right: 2px solid #3b3a3e;
}
.pin-gitlab { width: 32px; height: 30px; }
.pin-github { width: 36px; height: 36px; }

.tab-title {
  flex: 1;
  display: flex;
  align-items: center;
  justify-content: center;
  gap: 10px;
  color: #eeeeef;
  font-family: Roboto, sans-serif;
  font-size: 24px;
}

.tab-badge {
  width: 32px;
  height: 30px;
  border-radius: 6px;
  background: #8b8a90;
  color: #fff;
  font-size: 22px;
  display: flex;
  align-items: center;
  justify-content: center;
}

/* Page */
.page {
  flex: 1;
  min-height: 0;
  overflow: hidden;
  background: #fff;
  color: #000;
}

.intro {
  height: 505px;
  padding-top: 92px;
  text-align: center;
}

.title {
  margin: 0;
  font-size: 108px;
  font-weight: 400;
  line-height: 134px;
}

.lead {
  margin: 3px 0 0;
  font-size: 24px;
  font-weight: 600;
  letter-spacing: 1.550px;
  line-height: 36px;
}

.blurb {
  margin: 36px 0 0;
  font-size: 24px;
  line-height: 36px;
}

.today {
  margin: 13px 0 0;
  font-size: 30px;
  line-height: 40px;
}

.rule {
  margin: 0;
  height: 15px;
  border: 0;
  background: #000;
}

.greeting {
  margin: 0;
  height: 97px;
  padding-top: 41px;
  text-align: center;
  font-size: 24px;
  font-weight: 600;
  letter-spacing: 1.500px;
  line-height: 36px;
}

.planner { width: 1710px; margin: 0 auto; }

.row {
  height: 120px;
  display: flex;
  align-items: flex-start;
}

.hour {
  width: 142px;
  height: 119px;
  flex: none;
  margin-top: 1px;
  padding-top: 2px;
  display: flex;
  align-items: center;
  justify-content: center;
  background: repeating-linear-gradient(90deg, #000 0 7px, transparent 7px 12px) top left / 100% 2px no-repeat;
  font-size: 24px;
}

.task {
  width: 1285px;
  height: 119px;
  flex: none;
  background: #77dd7f;
  border-top: 1px solid #ddd;
  border-bottom: 1px solid #6aa36f;
  border-right: 2px solid #000;
}

.save {
  width: 282px;
  height: 114px;
  flex: none;
  margin-top: 4px;
  padding: 0 0 5px;
  background: #02aed4;
  color: #fff;
  font-family: "Open Sans", sans-serif;
  font-size: 24px;
  border: 0;
  border-right: 3px solid #707070;
  border-bottom: 3px solid #707070;
  border-radius: 0 20px 20px 0;
}

/* Dock */
.dock {
  position: absolute;
  left: 105px;
  top: 1681px;
  width: 2669px;
  height: 108px;
  display: flex;
  align-items: flex-start;
  gap: 22px;
  padding: 14px 13px 0 14px;
  border: 2px solid rgba(255, 255, 255, .14);
  border-radius: 34px;
  background: linear-gradient(90deg, #22123a 0%, #1e1f48 30%, #1f2050 50%, #351d60 72%, #2b1a52 88%, #241240 100%);
  box-shadow: 0 0 60px rgba(0, 0, 0, .28);
}

.app { width: 70px; height: 70px; flex: none; position: relative; }
.app > svg { display: block; width: 100%; height: auto; overflow: visible; }
.app-tilt > svg { width: 74px; margin-top: -6px; }
.app-numbers > svg { width: 75px; margin: -1px 0 0 -2px; }
.app-keynote > svg { width: 70px; margin-top: -3px; }
.app-trash > svg { width: 62px; height: 81px; margin: -7px 0 0 -1px; }

.petals ellipse { mix-blend-mode: multiply; }

.dot {
  position: absolute;
  left: 32px;
  top: 82px;
  width: 6px;
  height: 7px;
  border-radius: 50%;
  background: #9c8fc4;
}

.badge {
  position: absolute;
  left: 47px;
  top: -9px;
  width: 34px;
  height: 34px;
  border-radius: 50%;
  background: #ee3a37;
  color: #fff;
  font-family: Roboto, sans-serif;
  font-size: 22px;
  display: flex;
  align-items: center;
  justify-content: center;
}

.dock-sep {
  width: 2px;
  height: 82px;
  flex: none;
  margin: -3px 8px 0 10px;
  background: rgba(200, 180, 230, .45);
}
.dock-sep-end { margin: -3px 10px 0 10px; }

.cal-mon { font: 700 15px Roboto, sans-serif; fill: #fff; }
.cal-day { font: 300 45px Roboto, sans-serif; fill: #333; }
.tv-label { font: 400 30px Roboto, sans-serif; fill: #fff; }
.pages-label { font: 700 11px Roboto, sans-serif; fill: #fff; }
.key-label { font: 700 4px Roboto, sans-serif; fill: #555; }
```
